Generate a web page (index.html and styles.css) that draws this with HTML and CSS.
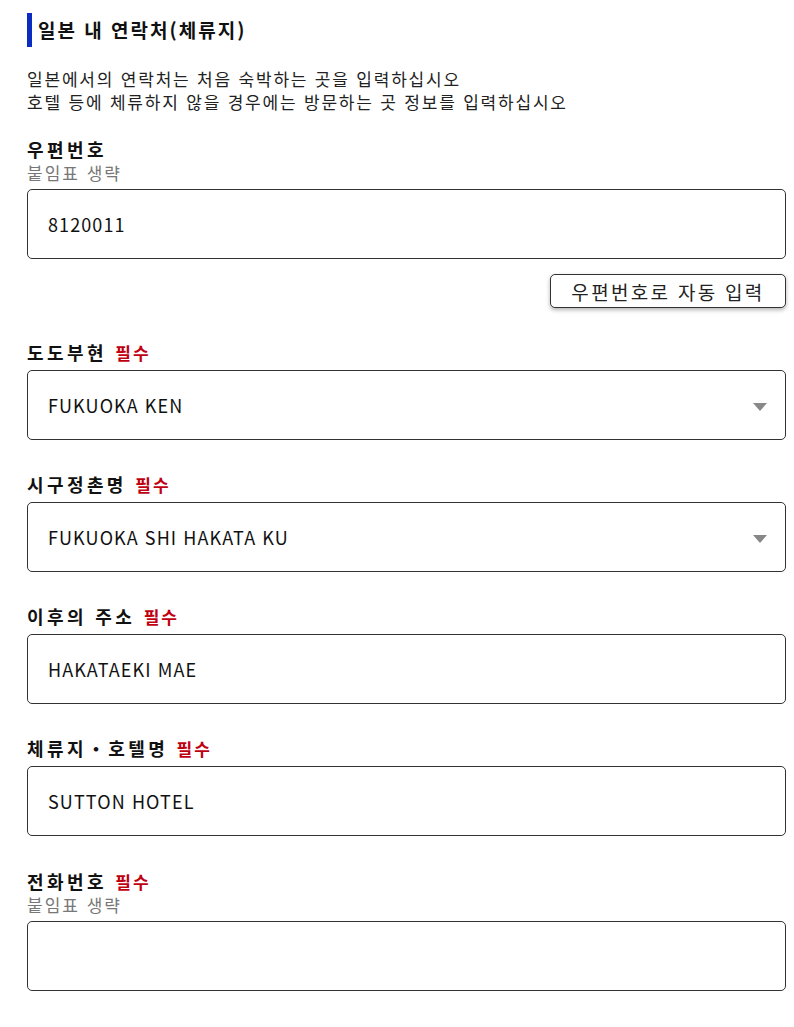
FILE: index.html
```html
<!DOCTYPE html>
<html lang="ko">
<head>
<meta charset="utf-8">
<title>일본 내 연락처</title>
<link rel="stylesheet" href="styles.css">
</head>
<body>
<main class="form">
  <h2 class="section-title">일본 내 연락처(체류지)</h2>
  <p class="desc">일본에서의 연락처는 처음 숙박하는 곳을 입력하십시오<br>호텔 등에 체류하지 않을 경우에는 방문하는 곳 정보를 입력하십시오</p>

  <div class="field first">
    <div class="label">우편번호</div>
    <div class="sub">붙임표 생략</div>
    <div class="box">8120011</div>
    <div class="btn-row"><button class="btn">우편번호로 자동 입력</button></div>
  </div>

  <div class="field">
    <div class="label">도도부현 <span class="req">필수</span></div>
    <div class="box select">FUKUOKA KEN<span class="arrow"></span></div>
  </div>

  <div class="field">
    <div class="label">시구정촌명 <span class="req">필수</span></div>
    <div class="box select">FUKUOKA SHI HAKATA KU<span class="arrow"></span></div>
  </div>

  <div class="field">
    <div class="label">이후의 주소 <span class="req">필수</span></div>
    <div class="box">HAKATAEKI MAE</div>
  </div>

  <div class="field">
    <div class="label">체류지・호텔명 <span class="req">필수</span></div>
    <div class="box">SUTTON HOTEL</div>
  </div>

  <div class="field last">
    <div class="label">전화번호 <span class="req">필수</span></div>
    <div class="sub">붙임표 생략</div>
    <div class="box"></div>
  </div>
</main>
</body>
</html>
```

FILE: styles.css
```css
* { box-sizing: border-box; }
body {
  margin: 0;
  background: #fff;
  font-family: "Noto Sans CJK KR", "Noto Sans", sans-serif;
  color: #111;
}
.form {
  padding: 13px 8px 0 27px;
}
.section-title {
  margin: 0;
  height: 34px;
  line-height: 34px;
  border-left: 5px solid #0a2cc0;
  padding-left: 6px;
  font-size: 19px;
  letter-spacing: 2px;
  font-weight: 700;
  color: #111;
}
.desc {
  margin: 20px 0 0;
  font-size: 17px;
  letter-spacing: 1.8px;
  line-height: 23px;
  color: #222;
}
.field {
  margin-top: 32px;
}
.field.first { margin-top: 24px; }
.field.last { margin-top: 33px; }
.label {
  height: 24px;
  font-size: 18px;
  letter-spacing: 3.4px;
  line-height: 24px;
  font-weight: 700;
  color: #111;
  margin-bottom: 6px;
  white-space: nowrap;
}
.label:has(+ .sub) { margin-bottom: 0; }
.req {
  color: #c00010;
  font-size: 17px;
  line-height: 1;
  letter-spacing: 2px;
}
.sub {
  height: 23px;
  font-size: 17px;
  letter-spacing: 2px;
  line-height: 23px;
  color: #777;
  margin-bottom: 5px;
}
.box {
  position: relative;
  height: 70px;
  border: 1px solid #333;
  border-radius: 5px;
  padding: 0 20px;
  display: flex;
  align-items: center;
  font-size: 18px;
  letter-spacing: 1.1px;
  color: #111;
}
.arrow {
  position: absolute;
  right: 18px;
  top: 32px;
  width: 0;
  height: 0;
  border-left: 7px solid transparent;
  border-right: 7px solid transparent;
  border-top: 8px solid #888;
}
.btn-row {
  display: flex;
  justify-content: flex-end;
  margin-top: 15px;
  margin-bottom: 2px;
}
.btn {
  display: block;
  width: 236px;
  height: 34px;
  border: 1px solid #333;
  border-radius: 5px;
  background: #fff;
  box-shadow: 0 2px 4px rgba(0,0,0,0.3);
  font-family: inherit;
  font-size: 19px;
  letter-spacing: 2.3px;
  color: #222;
  padding: 0;
}
```
